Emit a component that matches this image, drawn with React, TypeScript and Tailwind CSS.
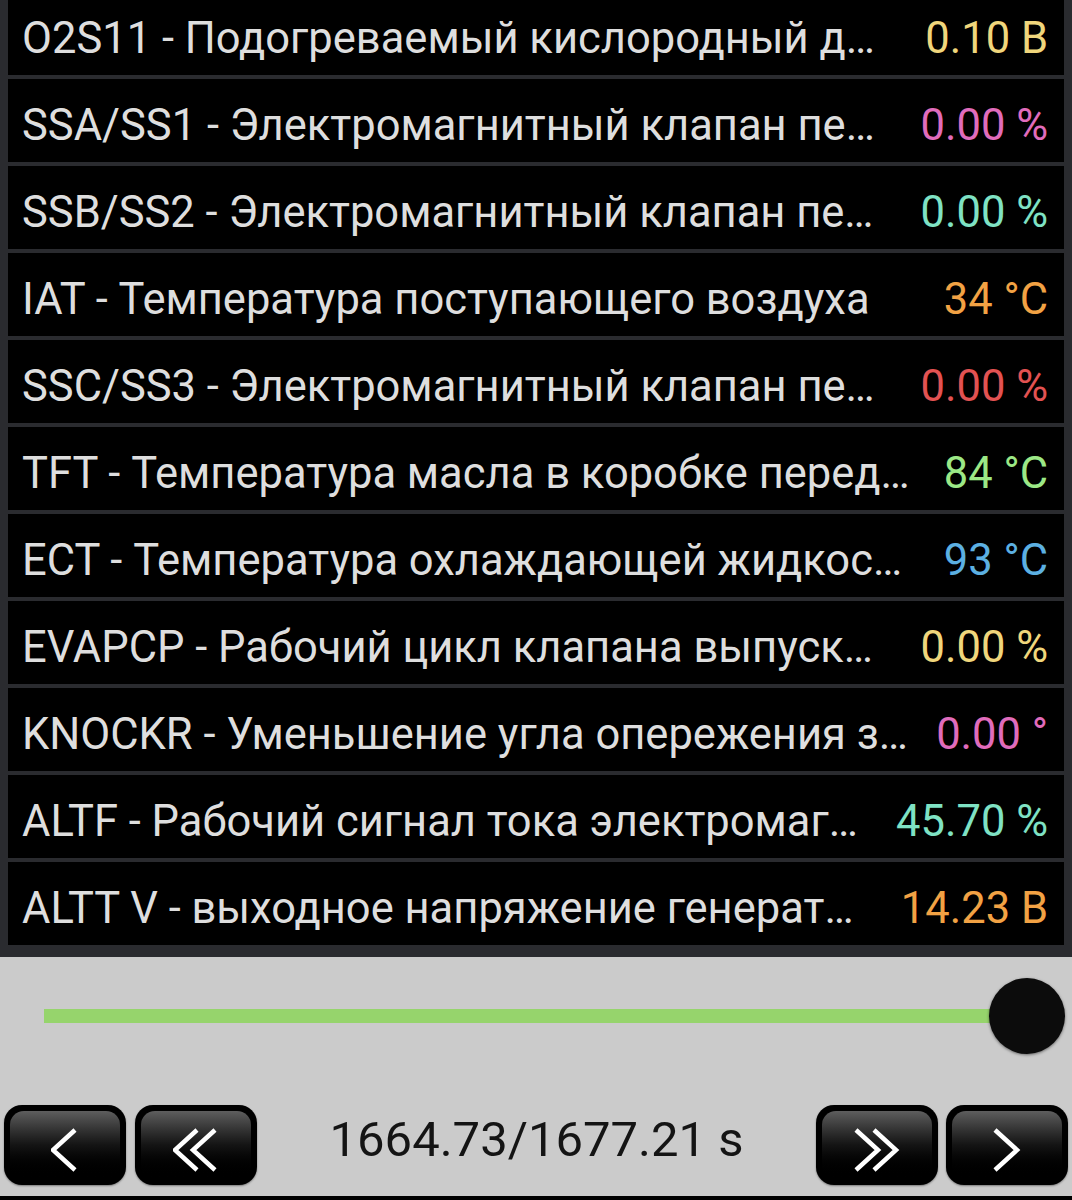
import React from "react";

interface Reading {
  label: string;
  value: string;
  color: string;
}

// labels are shown the way the device cuts them off
const readings: Reading[] = [
  { label: "O2S11 - Подогреваемый кислородный д…", value: "0.10 В", color: "text-[#f0d67c]" },
  { label: "SSA/SS1 - Электромагнитный клапан пе…", value: "0.00 %", color: "text-[#e06cbc]" },
  { label: "SSB/SS2 - Электромагнитный клапан пе…", value: "0.00 %", color: "text-[#7fe2c4]" },
  { label: "IAT - Температура поступающего воздуха", value: "34 °C", color: "text-[#f2a244]" },
  { label: "SSC/SS3 - Электромагнитный клапан пе…", value: "0.00 %", color: "text-[#e25252]" },
  { label: "TFT - Температура масла в коробке перед…", value: "84 °C", color: "text-[#9ce886]" },
  { label: "ECT - Температура охлаждающей жидкос…", value: "93 °C", color: "text-[#5cb0e2]" },
  { label: "EVAPCP - Рабочий цикл клапана выпуск…", value: "0.00 %", color: "text-[#f0d67c]" },
  { label: "KNOCKR - Уменьшение угла опережения з…", value: "0.00 °", color: "text-[#e06cbc]" },
  { label: "ALTF - Рабочий сигнал тока электромаг…", value: "45.70 %", color: "text-[#7fe2c4]" },
  { label: "ALTT V - выходное напряжение генерат…", value: "14.23 В", color: "text-[#f2a244]" },
];

function Chevron({ dir, double }: { dir: "left" | "right"; double?: boolean }) {
  const w = double ? 46 : 28;
  const pts = (x: number) =>
    dir === "left" ? `${x + 24},2 ${x + 2},22 ${x + 24},42` : `${x + 2},2 ${x + 24},22 ${x + 2},42`;
  return (
    <svg width={w} height={44} viewBox={`0 0 ${w} 44`} className="mt-[10px]">
      <polyline points={pts(0)} fill="none" stroke="white" strokeWidth={4.5} />
      {double && <polyline points={pts(18)} fill="none" stroke="white" strokeWidth={4.5} />}
    </svg>
  );
}

function NavButton({ children }: { children: React.ReactNode }) {
  return (
    <button className="w-[122px] h-[80px] rounded-[18px] bg-black p-[6px] shadow-[0_1px_2px_rgba(0,0,0,0.4)]">
      <div className="h-full w-full rounded-[14px] bg-gradient-to-b from-[#5e5e5e] via-[#141414] to-black flex items-center justify-center">
        {children}
      </div>
    </button>
  );
}

export default function App() {
  return (
    <div className="w-[1072px] h-[1200px] flex flex-col font-['Roboto',sans-serif] overflow-hidden">
      <div className="h-[957px] shrink-0 bg-[#2a2b2f] px-[8px] overflow-hidden">
        <div className="-mt-[8px] flex flex-col gap-[4px]">
          {readings.map((r) => (
            <div
              key={r.label}
              className="h-[83px] bg-black flex items-center justify-between pl-[14px] pr-[16px] pt-[10px] gap-[16px]"
            >
              <span className="text-[43.5px] text-[#dedede] whitespace-nowrap truncate min-w-0">{r.label}</span>
              <span className={`text-[43.5px] shrink-0 whitespace-nowrap ${r.color}`}>{r.value}</span>
            </div>
          ))}
        </div>
      </div>

      <div className="flex-1 bg-[#cbcbcb] flex flex-col pt-[21px]">
        {/* seek bar */}
        <div className="relative h-[76px] ml-[44px] mr-[7px]">
          <div className="absolute left-0 right-[38px] top-[31px] h-[14px] bg-[#96d46c]" />
          <div className="absolute right-0 top-0 w-[76px] h-[76px] rounded-full bg-[#0c0c0c] shadow-[0_1px_3px_rgba(0,0,0,0.5)]" />
        </div>

        <div className="mt-[49px] flex items-center px-[4px]">
          <div className="flex gap-[9px]">
            <NavButton>
              <Chevron dir="left" />
            </NavButton>
            <NavButton>
              <Chevron dir="left" double />
            </NavButton>
          </div>
          <div className="flex-1 text-center text-[49px] text-[#141414] pb-[10px]">1664.73/1677.21 s</div>
          <div className="flex gap-[8px]">
            <NavButton>
              <Chevron dir="right" double />
            </NavButton>
            <NavButton>
              <Chevron dir="right" />
            </NavButton>
          </div>
        </div>
      </div>
      <div className="h-[4px] bg-black shrink-0" />
    </div>
  );
}
